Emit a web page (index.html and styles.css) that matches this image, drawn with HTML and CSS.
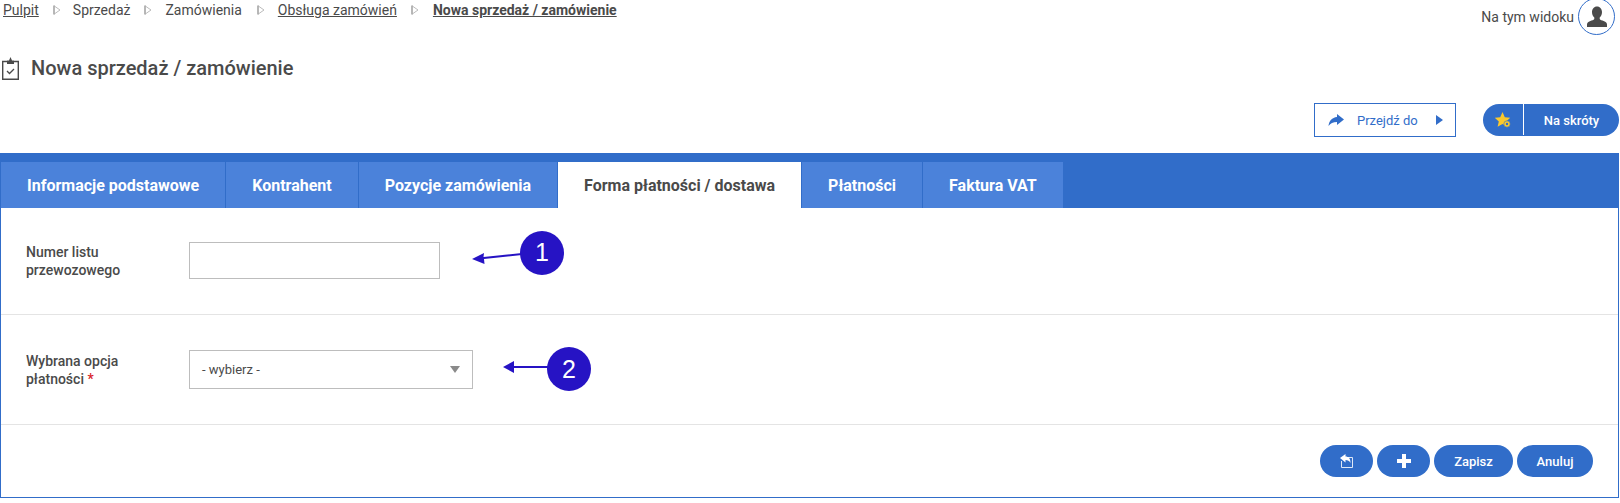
FILE: index.html
```html
<!DOCTYPE html>
<html lang="pl">
<head>
  <meta charset="UTF-8" />
  <title>Nowa sprzedaż / zamówienie</title>
  <link rel="stylesheet" href="styles.css">
</head>
<body>
  <div class="topbar">
    <div class="crumbs">
      <a href="#">Pulpit</a>
      <svg class="sep" viewBox="0 0 8 10"><path d="M1 .8v8.400L7 5z" fill="#fff" stroke="#bbb"/><path d="M1 .5v9" stroke="#aaa" stroke-width="1.500"/></svg>
      <span>Sprzedaż</span>
      <svg class="sep" viewBox="0 0 8 10"><path d="M1 .8v8.400L7 5z" fill="#fff" stroke="#bbb"/><path d="M1 .5v9" stroke="#aaa" stroke-width="1.500"/></svg>
      <span>Zamówienia</span>
      <svg class="sep" viewBox="0 0 8 10"><path d="M1 .8v8.400L7 5z" fill="#fff" stroke="#bbb"/><path d="M1 .5v9" stroke="#aaa" stroke-width="1.500"/></svg>
      <a href="#">Obsługa zamówień</a>
      <svg class="sep" viewBox="0 0 8 10"><path d="M1 .8v8.400L7 5z" fill="#fff" stroke="#bbb"/><path d="M1 .5v9" stroke="#aaa" stroke-width="1.500"/></svg>
      <a href="#" class="current">Nowa sprzedaż / zamówienie</a>
    </div>
    <div class="view-user">
      <span>Na tym widoku</span>
      <div class="avatar">
        <svg viewBox="0 0 24 24" width="24" height="24"><path fill="#4a4a4a" d="M12 1.500c3.100 0 5 2.500 5 5.500 0 2.300-.9 4.300-2.300 5.400v1.300c0 .8 1 1.300 2.800 1.900 2.300.8 4.500 1.800 4.500 3.900V22H2v-2.500c0-2.100 2.200-3.100 4.500-3.900 1.800-.6 2.800-1.100 2.800-1.900v-1.300C7.900 11.300 7 9.300 7 7c0-3 1.900-5.500 5-5.500z"/></svg>
      </div>
    </div>
  </div>

  <h1 class="page-title">
    <svg viewBox="0 0 17 23" width="17" height="23"><path d="M5 4.500H.7v17.800h15.600V4.500H12" fill="none" stroke="#4a4a4a" stroke-width="1.400"/><path d="M5 7V3.500h2L8.500 0 10 3.500h2V7z" fill="#4a4a4a"/><path d="M5 14l2.500 2.500L12 12" fill="none" stroke="#4a4a4a" stroke-width="1.300"/></svg>
    Nowa sprzedaż / zamówienie
  </h1>

  <div class="toolbar">
    <button class="goto-btn">
      <svg viewBox="0 0 16 12" width="16" height="12"><path fill="#316dc9" d="M9 0l7 5.500L9 11V8C5 8 2.500 9.500.5 12 1 7 4 3.500 9 3z"/></svg>
      <span>Przejdź do</span>
      <svg viewBox="0 0 7 10" width="7" height="10"><path fill="#316dc9" d="M0 0l7 5-7 5z"/></svg>
    </button>
    <button class="shortcut-btn">
      <span class="star">
        <svg viewBox="0 0 16 16" width="16" height="16"><path fill="#fbc92d" d="M7.500 0l2.300 5.200 5.400.5-4 3.700 1.200 5.400-4.900-2.900-4.900 2.900 1.200-5.400-4-3.700 5.400-.5z"/><circle cx="12" cy="12" r="3.200" fill="#fbc92d" stroke="#316dc9" stroke-width=".6"/><circle cx="12" cy="12" r="1.200" fill="#316dc9"/></svg>
      </span>
      <span class="shortcut-label">Na skróty</span>
    </button>
  </div>

  <div class="panel">
    <div class="tabs">
      <a class="tab">Informacje podstawowe</a>
      <a class="tab">Kontrahent</a>
      <a class="tab">Pozycje zamówienia</a>
      <a class="tab active">Forma płatności / dostawa</a>
      <a class="tab">Płatności</a>
      <a class="tab">Faktura VAT</a>
    </div>

    <div class="form-row first">
      <label class="field-label">Numer listu przewozowego</label>
      <input type="text" class="text-input" />
    </div>
    <div class="form-row second">
      <label class="field-label">Wybrana opcja<br>płatności <em>*</em></label>
      <div class="select-box">
        <span>- wybierz -</span>
        <svg viewBox="0 0 10 7" width="10" height="7"><path fill="#8a8a8a" d="M0 0h10L5 7z"/></svg>
      </div>
    </div>

    <div class="actions">
      <button class="round-btn icon-btn">
        <svg viewBox="0 0 13 14" width="13" height="14"><path fill="none" stroke="#dfe8f7" d="M6 3.500h6.500v10H1.500V7"/><path fill="#fff" d="M5.500 0v2.500c3 0 5 2 5 6.500-1.200-2.300-2.700-3-5-3v2.500L0 4z"/></svg>
      </button>
      <button class="round-btn icon-btn">
        <svg viewBox="0 0 14 14" width="14" height="14"><path fill="#fff" d="M5 0h4v5h5v4H9v5H5V9H0V5h5z"/></svg>
      </button>
      <button class="round-btn save">Zapisz</button>
      <button class="round-btn cancel">Anuluj</button>
    </div>

    <svg class="callout one" viewBox="0 0 100 50" width="100" height="50"><path d="M2 31l12-6-.5 3.900L52 25v2l-38 3.900.5 5.100z" fill="#2613c4"/><circle cx="72" cy="25" r="22" fill="#2613c4"/></svg>
    <span class="callout-num one">1</span>
    <svg class="callout two" viewBox="0 0 100 50" width="100" height="50"><path d="M3 22l11-6v5h38v2H14v5z" fill="#2613c4"/><circle cx="69" cy="24" r="22" fill="#2613c4"/></svg>
    <span class="callout-num two">2</span>
  </div>
</body>
</html>
```

FILE: styles.css
```css
* {
  box-sizing: border-box;
}
body {
  margin: 0;
  font-family: Roboto, "Liberation Sans", sans-serif;
  font-size: 14px;
  color: #4a4a4a;
  background: #fff;
  height: 503px;
  overflow: hidden;
}

.topbar {
  display: flex;
  justify-content: space-between;
  height: 33px;
  padding: 0 5px 0 3px;
}
.crumbs {
  display: flex;
  align-items: center;
  height: 19px;
}
.crumbs a {
  color: #4a4a4a;
}
.crumbs .current {
  font-weight: 700;
}
.sep {
  width: 8px;
  height: 10px;
  margin: 0 13px 0 14px;
}
.sep:nth-of-type(1) {
  margin-right: 12px;
}
.sep:nth-of-type(3) {
  margin-left: 15px;
}
.sep:nth-of-type(4) {
  margin-right: 14px;
}
.view-user {
  display: flex;
  align-items: center;
  gap: 4px;
  margin-top: -1px;
  height: 35px;
}
.avatar {
  width: 37px;
  height: 37px;
  border: 1px solid #316dc9;
  border-radius: 50%;
  display: flex;
  align-items: center;
  justify-content: center;
}

.page-title {
  display: flex;
  align-items: center;
  gap: 12px;
  margin: 22px 0 0 2px;
  height: 26px;
  font-size: 20px;
  font-weight: 500;
}

.toolbar {
  display: flex;
  justify-content: flex-end;
  align-items: center;
  gap: 27px;
  margin-top: 22px;
  padding-right: 1px;
  height: 34px;
}
.goto-btn {
  width: 142px;
  height: 34px;
  display: flex;
  align-items: center;
  padding: 0 12px 0 13px;
  background: #fff;
  border: 1px solid #316dc9;
  color: #316dc9;
  font: 13px Roboto, sans-serif;
}
.goto-btn span {
  margin: 0 auto 0 13px;
}
.shortcut-btn {
  width: 136px;
  height: 32px;
  display: flex;
  padding: 0;
  border: none;
  border-radius: 16px;
  background: #316dc9;
  color: #fff;
  font: 500 13px Roboto, sans-serif;
}
.star {
  width: 41px;
  height: 31px;
  display: flex;
  align-items: center;
  justify-content: center;
  border-right: 1px solid #fff;
}
.shortcut-label {
  flex: 1;
  align-self: center;
  text-align: center;
}

.panel {
  position: relative;
  margin: 16px 1px 0 0;
  height: 345px;
  border: 1px solid #316dc9;
  border-top-width: 9px;
}
.tabs {
  display: flex;
  height: 46px;
  background: #316dc9;
}
.tab {
  display: flex;
  align-items: center;
  padding: 0 26px;
  background: #4b82da;
  border-right: 1px solid #316dc9;
  color: #fff;
  font-size: 16px;
  font-weight: 700;
}
.tab.active {
  background: #fff;
  color: #4a4a4a;
}

.form-row {
  display: flex;
  align-items: center;
  border-bottom: 1px solid #e4e4e4;
  padding-left: 25px;
}
.form-row.first {
  height: 107px;
}
.form-row.second {
  height: 110px;
}
.field-label {
  width: 163px;
  font-weight: 500;
  font-size: 14px;
  line-height: 18px;
  padding-right: 30px;
}
.field-label em {
  color: #d8232a;
  font-style: normal;
}
.text-input {
  width: 251px;
  height: 37px;
  margin-bottom: 2px;
  border: 1px solid #bdbdbd;
  background: #fff;
}
.select-box {
  width: 284px;
  height: 39px;
  border: 1px solid #bdbdbd;
  display: flex;
  align-items: center;
  justify-content: space-between;
  padding: 0 12px 0 12px;
  font-size: 13px;
}

.actions {
  display: flex;
  justify-content: flex-end;
  gap: 4px;
  padding: 20px 25px 0 0;
}
.round-btn {
  height: 32px;
  display: flex;
  align-items: center;
  justify-content: center;
  border: none;
  border-radius: 16px;
  background: #316dc9;
  color: #fff;
  font: 500 13px Roboto, sans-serif;
}
.icon-btn {
  width: 53px;
}
.save {
  width: 79px;
}
.cancel {
  width: 76px;
}

.callout {
  position: absolute;
}
.callout.one {
  left: 469px;
  top: 66px;
}
.callout.two {
  left: 499px;
  top: 183px;
}
.callout-num {
  position: absolute;
  color: #fff;
  font: 25px "Liberation Sans", sans-serif;
}
.callout-num.one {
  left: 534px;
  top: 76px;
}
.callout-num.two {
  left: 561px;
  top: 193px;
}
```
